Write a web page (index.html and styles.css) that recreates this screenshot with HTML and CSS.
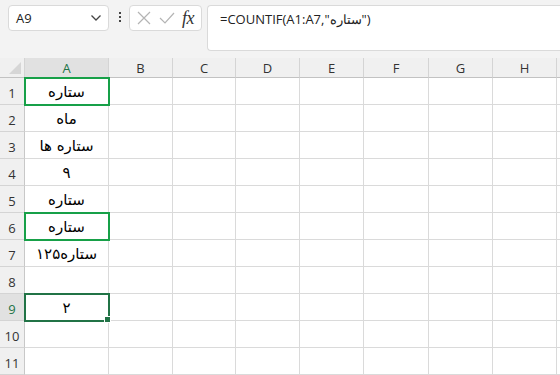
FILE: index.html
```html
<!DOCTYPE html>
<html lang="fa">
<head>
<meta charset="UTF-8" />
<title>COUNTIF</title>
<link rel="stylesheet" href="styles.css">
</head>
<body>

<div class="formula-bar" dir="ltr">
  <div class="name-box">
    <span>A9</span>
    <svg class="chev" width="12" height="8" viewBox="0 0 12 8"><path d="M1.5 1.5 L6 6 L10.5 1.5" fill="none" stroke="#444" stroke-width="1.3"/></svg>
  </div>
  <div class="dots"><i></i><i></i><i></i></div>
  <div class="fx-box">
    <svg width="16" height="16" viewBox="0 0 16 16"><path d="M2 2 L14 14 M14 2 L2 14" stroke="#b4b4b4" stroke-width="1.2"/></svg>
    <svg width="18" height="16" viewBox="0 0 18 16"><path d="M2 8 L7 13 L16 3" fill="none" stroke="#b4b4b4" stroke-width="1.2"/></svg>
    <span class="fx">fx</span>
  </div>
  <div class="formula">=COUNTIF(A1:A7,"ستاره")</div>
</div>

<div class="sheet" dir="ltr">
  <div class="corner"></div>
  <div class="col-head sel">A</div>
  <div class="col-head">B</div>
  <div class="col-head">C</div>
  <div class="col-head">D</div>
  <div class="col-head">E</div>
  <div class="col-head">F</div>
  <div class="col-head">G</div>
  <div class="col-head">H</div>
  <div class="col-head"></div>

  <div class="row-head">1</div><div class="cell a hl">ستاره</div><div class="cell"></div><div class="cell"></div><div class="cell"></div><div class="cell"></div><div class="cell"></div><div class="cell"></div><div class="cell"></div><div class="cell"></div>
  <div class="row-head">2</div><div class="cell a">ماه</div><div class="cell"></div><div class="cell"></div><div class="cell"></div><div class="cell"></div><div class="cell"></div><div class="cell"></div><div class="cell"></div><div class="cell"></div>
  <div class="row-head">3</div><div class="cell a">ستاره ها</div><div class="cell"></div><div class="cell"></div><div class="cell"></div><div class="cell"></div><div class="cell"></div><div class="cell"></div><div class="cell"></div><div class="cell"></div>
  <div class="row-head">4</div><div class="cell a">۹</div><div class="cell"></div><div class="cell"></div><div class="cell"></div><div class="cell"></div><div class="cell"></div><div class="cell"></div><div class="cell"></div><div class="cell"></div>
  <div class="row-head">5</div><div class="cell a">ستاره</div><div class="cell"></div><div class="cell"></div><div class="cell"></div><div class="cell"></div><div class="cell"></div><div class="cell"></div><div class="cell"></div><div class="cell"></div>
  <div class="row-head">6</div><div class="cell a hl">ستاره</div><div class="cell"></div><div class="cell"></div><div class="cell"></div><div class="cell"></div><div class="cell"></div><div class="cell"></div><div class="cell"></div><div class="cell"></div>
  <div class="row-head">7</div><div class="cell a">ستاره۱۲۵</div><div class="cell"></div><div class="cell"></div><div class="cell"></div><div class="cell"></div><div class="cell"></div><div class="cell"></div><div class="cell"></div><div class="cell"></div>
  <div class="row-head">8</div><div class="cell a"></div><div class="cell"></div><div class="cell"></div><div class="cell"></div><div class="cell"></div><div class="cell"></div><div class="cell"></div><div class="cell"></div><div class="cell"></div>
  <div class="row-head sel">9</div><div class="cell a active">۲</div><div class="cell"></div><div class="cell"></div><div class="cell"></div><div class="cell"></div><div class="cell"></div><div class="cell"></div><div class="cell"></div><div class="cell"></div>
  <div class="row-head">10</div><div class="cell a"></div><div class="cell"></div><div class="cell"></div><div class="cell"></div><div class="cell"></div><div class="cell"></div><div class="cell"></div><div class="cell"></div><div class="cell"></div>
  <div class="row-head">11</div><div class="cell a"></div><div class="cell"></div><div class="cell"></div><div class="cell"></div><div class="cell"></div><div class="cell"></div><div class="cell"></div><div class="cell"></div><div class="cell"></div>
</div>

</body>
</html>
```

FILE: styles.css
```css
html, body {
  margin: 0;
  width: 560px;
  height: 375px;
  overflow: hidden;
  background: #fff;
  font-family: 'Open Sans', 'Noto Sans', sans-serif;
}

/* formula bar */
.formula-bar {
  display: flex;
  align-items: flex-start;
  height: 58px;
  box-sizing: border-box;
  padding: 5px 0 0 8px;
  background: #f3f3f3;
}

.name-box {
  display: flex;
  align-items: center;
  justify-content: space-between;
  box-sizing: border-box;
  width: 101px;
  height: 26px;
  padding: 0 6px 0 7px;
  background: #fff;
  border: 1px solid #dadada;
  border-radius: 4px;
  font-size: 13px;
  color: #222;
}

.dots {
  display: flex;
  flex-direction: column;
  gap: 2px;
  padding: 7px 8px 0 10px;
}
.dots i {
  width: 2px;
  height: 2px;
  background: #444;
}

.fx-box {
  display: flex;
  align-items: center;
  gap: 6px;
  box-sizing: border-box;
  width: 73px;
  height: 26px;
  padding: 0 4px 0 6px;
  background: #fff;
  border: 1px solid #dadada;
  border-radius: 4px;
}
.fx {
  font-family: 'Liberation Serif', serif;
  font-style: italic;
  font-size: 18px;
  color: #333;
  margin-left: 0;
  letter-spacing: -0.5px;
}

.formula {
  flex: 1;
  box-sizing: border-box;
  height: 46px;
  margin-left: 5px;
  padding: 4px 12px;
  background: #fff;
  border: 1px solid #dadada;
  border-right: none;
  border-radius: 4px 0 0 4px;
  font-size: 13px;
  color: #222;
  white-space: nowrap;
}

/* sheet grid */
.sheet {
  display: grid;
  grid-template-columns: 25px 84px 64px 63px 64px 64px 65px 64px 64px 4px;
  grid-template-rows: 20px repeat(11, 27px);
}

.corner {
  position: relative;
  background: #f0f0f0;
  border-right: 1px solid #d4d4d4;
  border-bottom: 1px solid #c2c2c2;
}
.corner::after {
  content: '';
  position: absolute;
  right: 3px;
  bottom: 3px;
  border-left: 12px solid transparent;
  border-bottom: 12px solid #d6d6d6;
}

.col-head {
  display: flex;
  align-items: center;
  justify-content: center;
  background: #f0f0f0;
  border-right: 1px solid #d4d4d4;
  border-bottom: 1px solid #c2c2c2;
  font-size: 13px;
  color: #333;
}

.row-head {
  display: flex;
  align-items: flex-end;
  justify-content: center;
  padding-bottom: 2px;
  box-sizing: border-box;
  background: #f0f0f0;
  border-right: 1px solid #c8c8c8;
  border-bottom: 1px solid #d4d4d4;
  font-size: 13px;
  color: #333;
}

.col-head.sel,
.row-head.sel {
  background: #e1e1e1;
  color: #217346;
}
.col-head.sel {
  border-bottom: 1px solid #8a8a8a;
}

.cell {
  border-right: 1px solid #dadada;
  border-bottom: 1px solid #dadada;
  background: #fff;
}

.cell.a {
  position: relative;
  display: flex;
  align-items: flex-end;
  justify-content: center;
  box-sizing: border-box;
  padding-bottom: 3px;
  font-family: 'DejaVu Sans', sans-serif;
  font-size: 15px;
  color: #000;
}

.cell.hl {
  outline: 2px solid #17a048;
  outline-offset: -1px;
  z-index: 1;
}

.cell.active {
  outline: 2px solid #217346;
  outline-offset: -1px;
  z-index: 1;
}
.cell.active::after {
  content: '';
  position: absolute;
  right: -3px;
  bottom: -3px;
  width: 5px;
  height: 5px;
  background: #217346;
  border: 1px solid #fff;
}
```
